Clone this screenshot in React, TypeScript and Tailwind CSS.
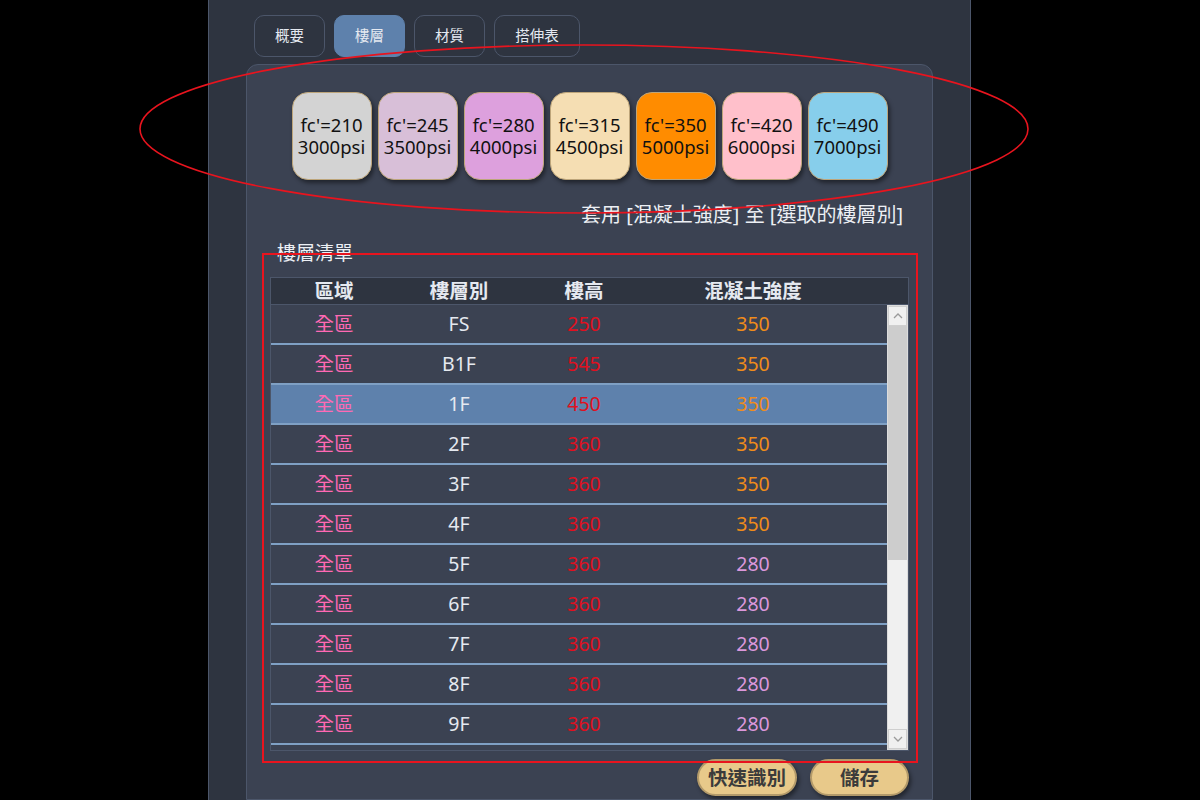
import React from "react";

const strengths = [
  { fc: "210", psi: "3000", bg: "bg-[#d3d3d3]" },
  { fc: "245", psi: "3500", bg: "bg-[#d8bfd8]" },
  { fc: "280", psi: "4000", bg: "bg-[#dda0dd]" },
  { fc: "315", psi: "4500", bg: "bg-[#f5deb3]" },
  { fc: "350", psi: "5000", bg: "bg-[#ff8c00]" },
  { fc: "420", psi: "6000", bg: "bg-[#ffc0cb]" },
  { fc: "490", psi: "7000", bg: "bg-[#87ceeb]" },
];

const floors = [
  { name: "FS", h: "250", fc: "350" },
  { name: "B1F", h: "545", fc: "350" },
  { name: "1F", h: "450", fc: "350" },
  { name: "2F", h: "360", fc: "350" },
  { name: "3F", h: "360", fc: "350" },
  { name: "4F", h: "360", fc: "350" },
  { name: "5F", h: "360", fc: "280" },
  { name: "6F", h: "360", fc: "280" },
  { name: "7F", h: "360", fc: "280" },
  { name: "8F", h: "360", fc: "280" },
  { name: "9F", h: "360", fc: "280" },
];

const tabs = [
  { label: "概要", w: "w-[71px]" },
  { label: "樓層", w: "w-[71px]", active: true },
  { label: "材質", w: "w-[71px]" },
  { label: "搭伸表", w: "w-[86px]" },
];

const fcColor = (fc: string) => (fc === "350" ? "text-[#f08c1a]" : "text-[#dc98dc]");

const App = () => {
  return (
    <div className="relative flex bg-black w-full h-[800px] overflow-hidden font-['Noto_Sans','Noto_Sans_CJK_TC',sans-serif]">
      {/* Main panel */}
      <div className="flex flex-col bg-[#2e3440] ml-[208px] border-[#4c566a] border-x w-[763px] h-full">
        {/* Tabs */}
        <div className="flex gap-[9px] mt-[15px] ml-[45px]">
          {tabs.map((t) => (
            <div
              key={t.label}
              className={`flex justify-center items-center rounded-[10px] h-[42px] text-[14.5px] text-[#e5e9f0] border ${t.w} ${
                t.active ? "bg-[#5e81ac] border-[#5e81ac]" : "border-[#4c566a]"
              }`}
            >
              {t.label}
            </div>
          ))}
        </div>

        {/* Card */}
        <div className="flex flex-col flex-1 bg-[#3b4252] mx-[37px] mt-[7px] border border-[#4c566a] rounded-t-[12px]">
          {/* Strength buttons */}
          <div className="flex justify-center gap-[6px] mt-[27px]">
            {strengths.map((s) => (
              <div
                key={s.fc}
                className={`flex flex-col justify-center items-center shadow-[2px_3px_4px_rgba(0,0,0,0.45)] border-[#bda57a] border-[1.5px] rounded-[16px] w-[80px] h-[88px] text-[#111] text-[18.5px] leading-[22px] ${s.bg}`}
              >
                <span>fc'={s.fc}</span>
                <span>{s.psi}psi</span>
              </div>
            ))}
          </div>

          <div className="mt-[21px] mr-[29px] text-[#eceff4] text-[20px] text-right leading-[28px]">
            套用 [混凝土強度] 至 [選取的樓層別]
          </div>

          <div className="mt-[12px] ml-[30px] text-[#eceff4] text-[19px] leading-[24px]">樓層清單</div>

          {/* Table */}
          <div className="flex flex-col mx-[23px] mt-[12px] border border-[#4c566a] h-[474px]">
            <div className="flex items-center bg-[#2e3440] border-[#4c566a] border-b h-[27px] font-bold text-[#e5e9f0] text-[19.5px]">
              <div className="w-[126px] text-center">區域</div>
              <div className="w-[124px] text-center">樓層別</div>
              <div className="w-[126px] text-center">樓高</div>
              <div className="w-[212px] text-center">混凝土強度</div>
            </div>
            <div className="flex flex-1">
              <div className="flex flex-col flex-1">
                {floors.map((f) => (
                  <div
                    key={f.name}
                    className={`flex items-center border-b-2 border-[#7fa0c4] h-10 text-[19.5px] ${
                      f.name === "1F" ? "bg-[#5e81ac]" : ""
                    }`}
                  >
                    <div className="w-[126px] text-[#ff69b4] text-center">全區</div>
                    <div className="w-[124px] text-[#e5e9f0] text-center">{f.name}</div>
                    <div className="w-[126px] text-[#e01020] text-center">{f.h}</div>
                    <div className={`w-[212px] text-center ${fcColor(f.fc)}`}>{f.fc}</div>
                  </div>
                ))}
              </div>
              {/* Scrollbar */}
              <div className="flex flex-col bg-[#f0f0f0] border border-[#dcdcdc] w-[21px]">
                <div className="flex justify-center items-center bg-[#f0f0f0] border border-[#cfcfcf] h-[20px]">
                  <svg width="10" height="6" viewBox="0 0 10 6">
                    <path d="M1 5 L5 1 L9 5" stroke="#9a9a9a" strokeWidth="1.3" fill="none" />
                  </svg>
                </div>
                <div className="bg-[#cdcdcd] h-[234px]" />
                <div className="flex-1" />
                <div className="flex justify-center items-center border border-[#cfcfcf] h-[20px]">
                  <svg width="10" height="6" viewBox="0 0 10 6">
                    <path d="M1 1 L5 5 L9 1" stroke="#9a9a9a" strokeWidth="1.3" fill="none" />
                  </svg>
                </div>
              </div>
            </div>
          </div>

          {/* Bottom buttons */}
          <div className="flex justify-end gap-[13px] mt-[8px] mr-[23px]">
            <div className="flex justify-center items-center bg-[#e8c98a] shadow-[2px_3px_4px_rgba(0,0,0,0.45)] border-[#b39a6a] border-2 rounded-full w-[100px] h-[37px] font-bold text-[#3b3b3b] text-[19.5px]">
              快速識別
            </div>
            <div className="flex justify-center items-center bg-[#e8c98a] shadow-[2px_3px_4px_rgba(0,0,0,0.45)] border-[#b39a6a] border-2 rounded-full w-[99px] h-[37px] font-bold text-[#3b3b3b] text-[19.5px]">
              儲存
            </div>
          </div>
        </div>
      </div>

      {/* Annotations */}
      <svg className="absolute inset-0 pointer-events-none" width="1200" height="800">
        <ellipse cx="584" cy="129" rx="444" ry="84" stroke="#e8141e" strokeWidth="1.6" fill="none" />
        <rect x="263" y="254" width="654" height="508" stroke="#e8141e" strokeWidth="2" fill="none" />
      </svg>
    </div>
  );
};

export default App;
